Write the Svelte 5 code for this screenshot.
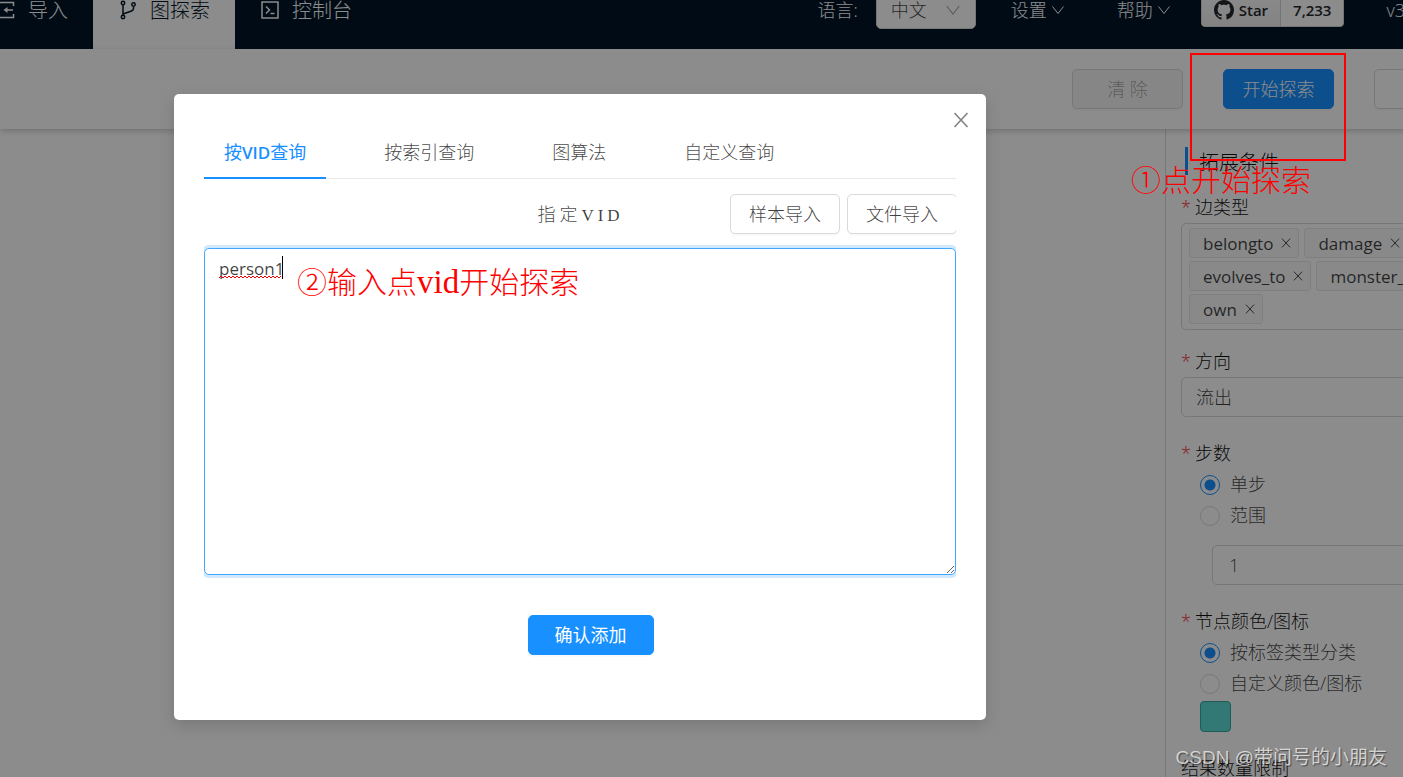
<script lang="ts">
	const edgeTypes = ['belongto', 'damage', 'evolves_to', 'monster_to', 'own'];
	const queryTabs = ['按VID查询', '按索引查询', '图算法', '自定义查询'];

	let activeTab = $state(0);
	let vids = $state('person1');
	let language = $state('zh');
	let direction = $state('out');
	let stepMode = $state('single');
	let steps = $state('1');
	let colorMode = $state('tag');
</script>

{#snippet chevron()}
	<svg class="chevron" viewBox="0 0 14 14" aria-hidden="true"><path d="M1.500 3.500 7 10.500l5.500-7" /></svg>
{/snippet}

{#snippet cross()}
	<svg class="cross" viewBox="0 0 16 16" aria-hidden="true"><path d="M1.500 1 14.500 15M14.500 1 1.500 15" /></svg>
{/snippet}

<div class="app">
	<header class="header">
		<nav class="nav">
			<a class="nav-item" href="#import">
				<svg viewBox="0 0 20 20" aria-hidden="true">
					<path d="M17.500 6V2.500H2.500v15h15V14M17 10H9" />
					<path class="solid" d="M11.500 7v6L7.500 10z" />
				</svg>
				<span>导入</span>
			</a>
			<a class="nav-item active" href="#explore">
				<svg viewBox="0 0 20 20" aria-hidden="true">
					<circle cx="5" cy="3" r="1.700" />
					<circle cx="5" cy="17" r="1.700" />
					<circle cx="15.500" cy="4.500" r="1.700" />
					<path d="M5 5v10M15.500 6.500v2c0 1.500-.5 2-2 2.500L5 14" />
				</svg>
				<span>图探索</span>
			</a>
			<a class="nav-item" href="#console">
				<svg viewBox="0 0 20 20" aria-hidden="true">
					<rect x="2" y="2" width="16" height="16" />
					<path d="m6 6.500 3.500 3.500L6 13.500M10.500 13.500h4" />
				</svg>
				<span>控制台</span>
			</a>
		</nav>
		<div class="header-right">
			<label for="language">语言:</label>
			<div class="language">
				<select id="language" bind:value={language}>
					<option value="zh">中文</option>
					<option value="en">English</option>
				</select>
				{@render chevron()}
			</div>
			<button class="menu settings">设置{@render chevron()}</button>
			<button class="menu help">帮助{@render chevron()}</button>
			<div class="github">
				<a class="star" href="#star">
					<svg viewBox="0 0 16 16" aria-hidden="true">
						<path d="M8 0C3.580 0 0 3.580 0 8c0 3.540 2.290 6.530 5.470 7.590.4.070.55-.17.55-.38 0-.19-.01-.82-.01-1.490-2.010.37-2.530-.49-2.690-.94-.09-.23-.48-.94-.82-1.130-.28-.15-.68-.52-.01-.53.63-.01 1.080.58 1.230.82.72 1.210 1.870.87 2.330.66.07-.52.28-.87.51-1.070-1.780-.2-3.640-.89-3.640-3.950 0-.87.31-1.590.82-2.150-.08-.2-.36-1.020.08-2.120 0 0 .67-.21 2.200.82.64-.18 1.320-.27 2-.27s1.360.09 2 .27c1.530-1.040 2.200-.82 2.200-.82.44 1.100.16 1.920.08 2.120.51.56.82 1.270.82 2.150 0 3.070-1.870 3.750-3.650 3.950.29.25.54.73.54 1.480 0 1.070-.01 1.930-.01 2.200 0 .21.15.46.55.38A8.010 8.010 0 0 0 16 8c0-4.420-3.580-8-8-8z" />
					</svg>
					Star
				</a>
				<a class="count" href="#stargazers">7,233</a>
			</div>
			<span class="version">v3</span>
		</div>
	</header>

	<div class="toolbar">
		<button class="btn clear" disabled>清 除</button>
		<button class="btn primary">开始探索</button>
		<button class="btn more" aria-label="更多"></button>
	</div>

	<div class="workspace">
		<main class="canvas"></main>
		<aside class="sidebar">
			<h2>拓展条件</h2>

			<div class="field edges">
				<p class="label required">边类型</p>
				<div class="tags">
					{#each edgeTypes as edge}
						<span class="tag">{edge}<button aria-label="移除 {edge}">{@render cross()}</button></span>
					{/each}
				</div>
			</div>

			<div class="field">
				<label class="label required" for="direction">方向</label>
				<select id="direction" class="control" bind:value={direction}>
					<option value="out">流出</option>
					<option value="in">流入</option>
				</select>
			</div>

			<fieldset class="field">
				<legend class="label required">步数</legend>
				<label class="radio"><input type="radio" name="steps" value="single" bind:group={stepMode} />单步</label>
				<label class="radio"><input type="radio" name="steps" value="range" bind:group={stepMode} />范围</label>
				<input class="control steps" type="text" aria-label="步数" bind:value={steps} />
			</fieldset>

			<fieldset class="field">
				<legend class="label required">节点颜色/图标</legend>
				<label class="radio"><input type="radio" name="color" value="tag" bind:group={colorMode} />按标签类型分类</label>
				<label class="radio"><input type="radio" name="color" value="custom" bind:group={colorMode} />自定义颜色/图标</label>
				<button class="swatch" aria-label="颜色"></button>
			</fieldset>

			<p class="label">结果数量限制</p>
		</aside>
	</div>

	<div class="mask">
		<div class="modal" role="dialog" aria-modal="true" aria-label="开始探索">
			<button class="close" aria-label="关闭">{@render cross()}</button>
			<div class="tabs" role="tablist">
				{#each queryTabs as tab, i}
					<button role="tab" class:active={i === activeTab} aria-selected={i === activeTab} onclick={() => (activeTab = i)}>
						{#each tab.split(/(VID)/) as part}{#if part === 'VID'}<b>{part}</b>{:else}{part}{/if}{/each}
					</button>
				{/each}
			</div>
			<div class="panel">
				<div class="panel-head">
					<label for="vids">指定<span>VID</span></label>
					<div class="imports">
						<button class="btn">样本导入</button>
						<button class="btn">文件导入</button>
					</div>
				</div>
				<div class="editor">
					<textarea id="vids" spellcheck="false" bind:value={vids}></textarea>
					<svg class="squiggle" viewBox="0 0 64 24" aria-hidden="true">
						<path class="wave" d="M0 22l2-2 2 2 2-2 2 2 2-2 2 2 2-2 2 2 2-2 2 2 2-2 2 2 2-2 2 2 2-2 2 2 2-2 2 2 2-2 2 2 2-2 2 2 2-2 2 2 2-2 2 2 2-2 2 2 2-2 2 2 2-2" />
						<path class="caret" d="M63.500 0v23" />
					</svg>
				</div>
			</div>
			<div class="modal-foot">
				<button class="btn primary">确认添加</button>
			</div>
		</div>
	</div>

	<div class="note-box"></div>
	<p class="note first">①点开始探索</p>
	<p class="note second">②输入点<span>vid</span>开始探索</p>
	<p class="watermark">CSDN @带问号的小朋友</p>
</div>

<style>
	:global(body) {
		margin: 0;
	}

	.app {
		--blue: #1890ff;
		--line: #d9d9d9;
		--text: rgba(0, 0, 0, 0.75);
		--ink: rgba(0, 0, 0, 0.95);
		position: relative;
		display: flex;
		flex-direction: column;
		height: 100vh;
		overflow: hidden;
		background: #fff;
		color: var(--text);
		font-family: 'Open Sans', 'Noto Sans CJK SC', sans-serif;
		font-size: 18px;
		font-weight: 300;
		line-height: 27px;
	}
	.app * {
		box-sizing: border-box;
	}
	button,
	input,
	select,
	textarea {
		margin: 0;
		font: inherit;
		color: inherit;
	}
	button {
		padding: 0;
		border: 0;
		background: none;
		cursor: pointer;
	}
	a {
		color: inherit;
		text-decoration: none;
	}
	h2,
	p {
		margin: 0;
	}
	svg {
		fill: none;
		stroke: currentColor;
		flex: none;
	}

	.header {
		display: flex;
		flex: none;
		height: 78px;
		margin-top: -29px;
		background: #001529;
		color: #fff;
	}
	.nav {
		display: flex;
		margin-left: -29px;
		font-size: 20px;
	}
	.nav-item {
		display: flex;
		align-items: center;
		gap: 12px;
		padding: 0 25px;
		white-space: nowrap;
	}
	.nav-item svg {
		width: 20px;
		height: 20px;
		stroke-width: 1.5;
	}
	.nav-item .solid {
		fill: currentColor;
		stroke: none;
	}
	.nav-item.active {
		background: #fff;
		color: #001529;
	}
	.header-right {
		display: flex;
		align-items: center;
		margin-left: auto;
		margin-right: -2px;
		white-space: nowrap;
	}
	.chevron {
		width: 14px;
		height: 14px;
	}
	.language {
		display: flex;
		align-items: center;
		width: 100px;
		height: 38px;
		margin-left: 18px;
		padding-right: 14px;
		border: 1px solid var(--line);
		border-radius: 5px;
		background: #fff;
		color: var(--text);
	}
	.language select {
		flex: 1;
		min-width: 0;
		padding: 0 0 0 14px;
		border: 0;
		background: none;
		appearance: none;
	}
	.language .chevron {
		width: 16px;
		height: 16px;
		color: rgba(0, 0, 0, 0.35);
	}
	.menu {
		display: flex;
		align-items: center;
		gap: 4px;
	}
	.settings {
		margin-left: 35px;
	}
	.help {
		margin-left: 52px;
	}
	.github {
		display: flex;
		height: 33px;
		margin: 0 42px 0 30px;
		border: 1px solid #d5d5d5;
		border-radius: 4px;
		background: #fff;
		color: #24292e;
		font-size: 15px;
		font-weight: 600;
		overflow: hidden;
	}
	.star,
	.count {
		display: flex;
		align-items: center;
		padding: 0 12px;
	}
	.star {
		gap: 5px;
		border-right: 1px solid #d5d5d5;
		background: linear-gradient(#fcfcfc, #eee);
	}
	.star svg {
		width: 20px;
		height: 20px;
		fill: currentColor;
		stroke: none;
	}

	.toolbar {
		position: relative;
		display: flex;
		flex: none;
		justify-content: flex-end;
		gap: 40px;
		margin-right: -82px;
		padding: 20px 0;
		box-shadow: 0 2px 6px rgba(0, 0, 0, 0.2);
	}
	.btn {
		height: 40px;
		padding: 0 18px;
		border: 1px solid var(--line);
		border-radius: 5px;
		background: #fff;
		box-shadow: 0 2px 0 rgba(0, 0, 0, 0.02);
		white-space: nowrap;
	}
	.btn:disabled {
		background: #f5f5f5;
		color: rgba(0, 0, 0, 0.35);
	}
	.btn.primary {
		border-color: var(--blue);
		background: var(--blue);
		color: #fff;
	}
	.toolbar .btn {
		width: 111px;
	}

	.workspace {
		display: flex;
		flex: 1;
		min-height: 0;
	}
	.canvas {
		flex: 1;
	}
	.sidebar {
		width: 238px;
		padding: 18px 0 0 15px;
		border-left: 1px solid var(--line);
		overflow: hidden;
		white-space: nowrap;
	}
	h2 {
		margin: 0 0 18px 4px;
		padding: 4px 0 0 11px;
		border-left: 3px solid var(--blue);
		color: var(--ink);
		font-size: 20px;
		font-weight: 300;
		line-height: 24px;
	}
	.field {
		width: 300px;
		margin: 0 0 22px;
		padding: 0;
		border: 0;
	}
	.edges {
		margin-bottom: 17px;
	}
	.label {
		display: block;
		padding: 0 0 2px;
		color: var(--ink);
		line-height: 28px;
	}
	.required::before {
		content: '*';
		margin-right: 4px;
		color: #f5222d;
	}
	.tags {
		display: flex;
		flex-wrap: wrap;
		gap: 3px 5px;
		padding: 4px 7px 5px;
		border: 1px solid var(--line);
		border-radius: 5px;
	}
	.tag {
		display: flex;
		align-items: center;
		gap: 8px;
		height: 30px;
		padding: 0 7px 0 13px;
		border: 1px solid #e8e8e8;
		border-radius: 3px;
		background: #fafafa;
		font-size: 17px;
		font-weight: 400;
	}
	.tag button {
		display: flex;
	}
	.tag .cross {
		width: 10px;
		height: 10px;
		stroke-width: 1.5;
	}
	.control {
		display: block;
		width: 300px;
		height: 40px;
		padding: 0 14px;
		border: 1px solid var(--line);
		border-radius: 5px;
		background: #fff;
		appearance: none;
	}
	.steps {
		margin: 14px 0 0 31px;
		padding: 0 16px;
	}
	.radio {
		display: flex;
		align-items: center;
		gap: 10px;
		height: 31px;
		padding-left: 19px;
	}
	.radio input {
		width: 20px;
		height: 20px;
		border: 1px solid var(--line);
		border-radius: 50%;
		background: #fff;
		appearance: none;
	}
	.radio input:checked {
		border-color: var(--blue);
		background: radial-gradient(circle, var(--blue) 5px, #fff 6px);
	}
	.swatch {
		display: block;
		width: 31px;
		height: 31px;
		margin: 2px 0 0 19px;
		border: 1px solid #36a9a0;
		border-radius: 4px;
		background: #5cdbd3;
	}

	.mask {
		position: absolute;
		inset: 0;
		padding: 94px 0 0 174px;
		background: rgba(0, 0, 0, 0.45);
	}
	.modal {
		position: relative;
		width: 812px;
		max-width: 100%;
		padding: 30px 30px 65px;
		border-radius: 5px;
		background: #fff;
		box-shadow: 0 5px 15px rgba(0, 0, 0, 0.15);
	}
	.close {
		position: absolute;
		top: 18px;
		right: 17px;
		display: flex;
		color: rgba(0, 0, 0, 0.5);
	}
	.close .cross {
		width: 16px;
		height: 16px;
		stroke-width: 1.5;
	}
	.tabs {
		display: flex;
		gap: 38px;
		border-bottom: 1px solid #e8e8e8;
	}
	.tabs button {
		margin-bottom: -1px;
		padding: 15px 20px 11px;
		border-bottom: 2px solid transparent;
	}
	.tabs .active {
		border-color: var(--blue);
		color: var(--blue);
		font-weight: 400;
	}
	.tabs b {
		font-size: 17px;
		font-weight: 600;
	}
	.panel {
		padding: 15px 0 4px;
		overflow: hidden;
	}
	.panel-head {
		display: grid;
		grid-template-columns: 1fr auto 1fr;
		align-items: center;
		margin: 0 -1px 14px 0;
	}
	.panel-head label {
		grid-column: 2;
		font-family: 'Noto Sans CJK SC', sans-serif;
		letter-spacing: 4px;
	}
	.panel-head label span {
		font-family: 'Liberation Serif', serif;
		font-size: 17px;
	}
	.imports {
		display: flex;
		justify-content: flex-end;
		gap: 7px;
	}
	.editor {
		position: relative;
	}
	textarea {
		display: block;
		width: 100%;
		height: 327px;
		padding: 6px 14px;
		border: 1px solid #40a9ff;
		border-radius: 5px;
		outline: 0;
		box-shadow: 0 0 0 3px rgba(24, 144, 255, 0.2);
		font-size: 17px;
		font-weight: 400;
		resize: vertical;
	}
	.squiggle {
		position: absolute;
		top: 8px;
		left: 15px;
		width: 64px;
		height: 24px;
		pointer-events: none;
	}
	.wave {
		stroke: #e00;
	}
	.caret {
		stroke: #000;
	}
	.modal-foot {
		display: flex;
		justify-content: center;
		padding: 36px 0 0 21px;
	}
	.modal-foot .btn {
		padding: 0 26px;
		font-weight: 400;
	}

	.note-box {
		position: absolute;
		top: 53px;
		right: 57px;
		width: 156px;
		height: 108px;
		border: 2px solid #f00;
	}
	.note {
		position: absolute;
		color: #f00;
		font-family: 'Liberation Serif', 'Noto Sans CJK SC', serif;
		font-size: 30px;
		line-height: 40px;
		white-space: nowrap;
	}
	.note span {
		font-size: 33px;
	}
	.first {
		top: 161px;
		right: 92px;
	}
	.second {
		top: 262px;
		left: 297px;
	}
	.watermark {
		position: absolute;
		right: 16px;
		bottom: 6px;
		color: rgba(255, 255, 255, 0.7);
		font-family: 'Liberation Sans', 'Noto Sans CJK SC', sans-serif;
		font-size: 19px;
		font-weight: 400;
		text-shadow: 1px 1px 1px rgba(0, 0, 0, 0.5);
	}
</style>
